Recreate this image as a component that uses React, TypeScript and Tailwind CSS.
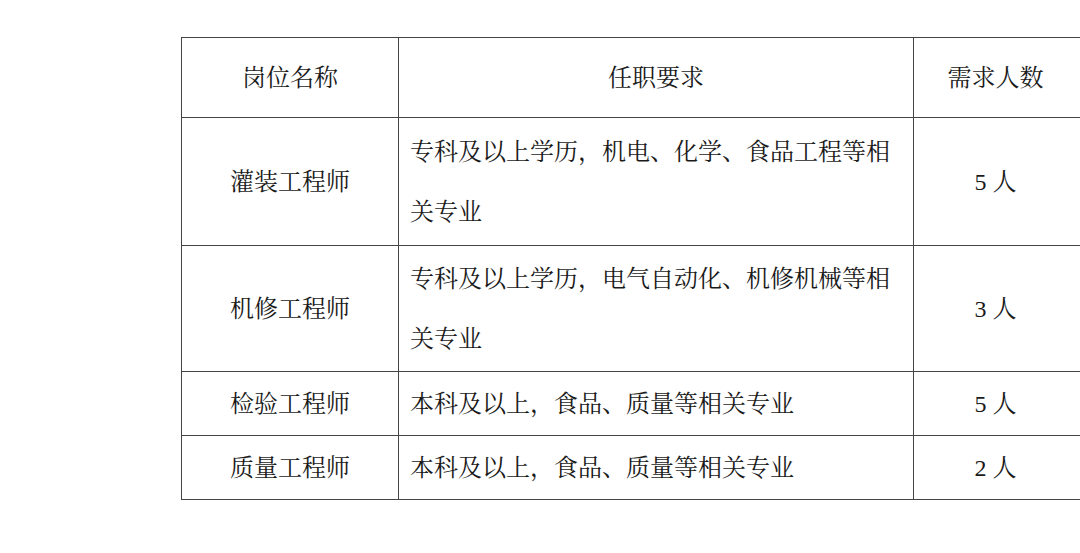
const rows = [
  { name: '灌装工程师', req: ['专科及以上学历，机电、化学、食品工程等相', '关专业'], num: '5 人', h: 'h-[128px]' },
  { name: '机修工程师', req: ['专科及以上学历，电气自动化、机修机械等相', '关专业'], num: '3 人', h: 'h-[126px]' },
  { name: '检验工程师', req: ['本科及以上，食品、质量等相关专业'], num: '5 人', h: 'h-[64px]' },
  { name: '质量工程师', req: ['本科及以上，食品、质量等相关专业'], num: '2 人', h: 'h-[64px]' },
]

export default function App() {
  return (
    <div
      className="w-[1080px] h-[553px] overflow-hidden bg-white text-[#1a1a1a]"
      style={{ fontFamily: '"Liberation Serif", "Noto Serif CJK SC", "Noto Sans CJK SC", serif' }}
    >
      <div className="pt-[37px] pl-[181px]">
        <table className="border-collapse table-fixed w-[900px] text-[24px]">
          <colgroup>
            <col className="w-[217px]" />
            <col className="w-[515px]" />
            <col className="w-[168px]" />
          </colgroup>
          <thead>
            <tr className="h-[80px]">
              <th className="border border-[#444] font-normal text-center">岗位名称</th>
              <th className="border border-[#444] font-normal text-center">任职要求</th>
              <th className="border border-[#444] font-normal text-center pr-[4px]">需求人数</th>
            </tr>
          </thead>
          <tbody>
            {rows.map((r) => (
              <tr key={r.name} className={r.h}>
                <td className="border border-[#444] text-center p-0">{r.name}</td>
                <td className="border border-[#444] pl-[11px] pr-0 py-0 leading-[60px] whitespace-nowrap">
                  {r.req.map((line) => (
                    <div key={line}>{line}</div>
                  ))}
                </td>
                <td className="border border-[#444] text-center py-0 pl-0 pr-[4px]">{r.num}</td>
              </tr>
            ))}
          </tbody>
        </table>
      </div>
    </div>
  )
}
